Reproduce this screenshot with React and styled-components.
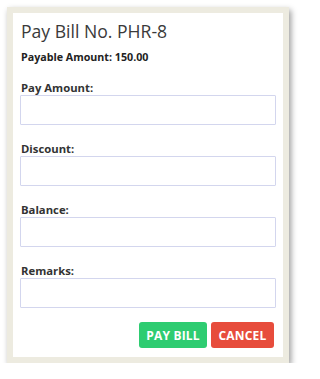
import React from "react";
import styled, { createGlobalStyle } from "styled-components";

const Global = createGlobalStyle`
  html, body { margin: 0; padding: 0; background: #ffffff; }
  body { font-family: "Open Sans", "Noto Sans", sans-serif; color: #333; }
`;

const Frame = styled.div`
  margin: 7px 0 0 7px;
  width: 270px;
  border: 6px solid #edebe0;
  box-shadow: 2px 3px 6px rgba(0, 0, 0, 0.4);
  background: #ffffff;
`;

const Panel = styled.div`
  padding: 5px 7px 9px 7px;
  display: flex;
  flex-direction: column;
`;

const Title = styled.h2`
  margin: 0 0 5px 1px;
  font-size: 17.6px;
  line-height: 26px;
  font-weight: 400;
  color: #3a3a3a;
`;

const Payable = styled.div`
  margin: 0 0 15px 1px;
  font-size: 10.7px;
  line-height: 16px;
  font-weight: 700;
  color: #222;
`;

const Field = styled.div`
  display: flex;
  flex-direction: column;
  margin-bottom: ${(p) => p.$gap}px;
`;

const Label = styled.label`
  margin-left: 1px;
  font-size: 11.3px;
  line-height: 15px;
  font-weight: 700;
  color: #333;
`;

const Input = styled.input`
  box-sizing: border-box;
  width: 256px;
  height: 30px;
  margin: 0;
  border: 1px solid #d3d6ee;
  border-radius: 1px;
  background: #fff;
  outline: none;
  font-family: inherit;
`;

const Actions = styled.div`
  display: flex;
  justify-content: flex-end;
  gap: 4px;
  margin-right: 2px;
`;

const Button = styled.button`
  height: 26px;
  padding: 0;
  width: ${(p) => p.$w}px;
  border: none;
  border-radius: 3px;
  background: ${(p) => p.$bg};
  color: #fff;
  font-family: "Open Sans", "Noto Sans", sans-serif;
  font-weight: 700;
  font-size: 12px;
  letter-spacing: 0.2px;
  text-transform: uppercase;
  cursor: pointer;
`;

const fields = ["Pay Amount:", "Discount:", "Balance:", "Remarks:"];

export default function App() {
  return (
    <>
      <Global />
      <Frame>
        <Panel>
          <Title>Pay Bill No. PHR-8</Title>
          <Payable>Payable Amount: 150.00</Payable>
          {fields.map((f, i) => (
            <Field key={f} $gap={i === fields.length - 1 ? 14 : 16}>
              <Label>{f}</Label>
              <Input type="text" />
            </Field>
          ))}
          <Actions>
            <Button $bg="#2ecc71" $w={68}>Pay Bill</Button>
            <Button $bg="#e74c3c" $w={63}>Cancel</Button>
          </Actions>
        </Panel>
      </Frame>
    </>
  );
}
